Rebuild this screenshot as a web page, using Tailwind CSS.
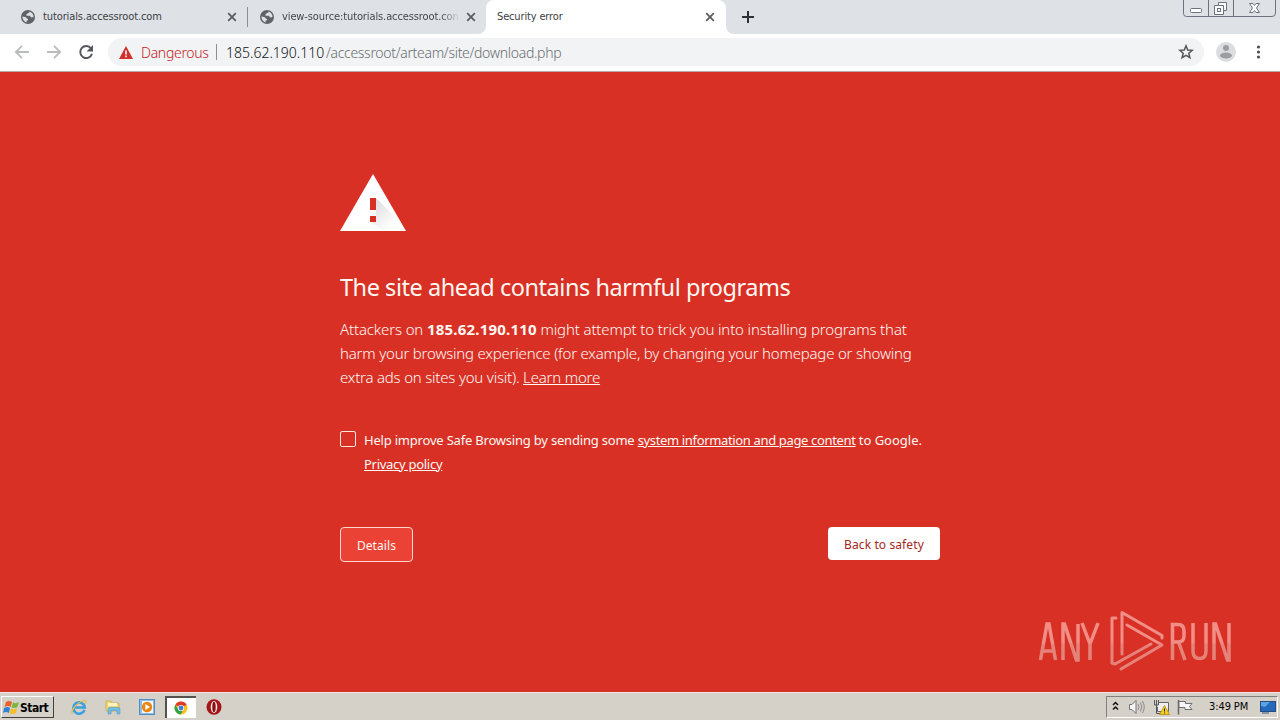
<!DOCTYPE html>
<html lang="en">
<head>
    <meta charset="UTF-8">
    <title>Security error</title>
    <script src="https://cdn.jsdelivr.net/npm/@tailwindcss/browser@4"></script>
</head>
<body class="w-[1280px] h-[720px] overflow-hidden flex flex-col bg-[#d93026] font-['Noto_Sans',sans-serif]">

    <svg class="hidden">
        <symbol id="globe" viewBox="0 0 14 14">
            <circle cx="7" cy="7" r="7" fill="#5f6368"/>
            <path d="M1.3 6.6 L4 6.9 Q5.6 7.2 5.7 8.6 Q7.4 8.8 7.2 10.2 L5.6 10.5 V12.4 Q2 11.6 1.3 6.6Z M8.6 1.5 Q8.4 3.2 6.8 3.1 Q6.6 4.3 5.2 4.5 Q5 5.7 6.2 5.8 H9 Q9.5 7.4 10.8 7.4 L12.5 7 Q12.6 3 8.6 1.5Z" fill="#dee1e6"/>
        </symbol>
        <symbol id="close" viewBox="0 0 10 10">
            <path d="M1.2 1.2 L8.8 8.8 M8.8 1.2 L1.2 8.8" stroke="#5a5d62" stroke-width="1.8"/>
        </symbol>
    </svg>

    <!-- Tab strip -->
    <div class="relative h-[34px] shrink-0 bg-[#dee1e6] flex text-[11px] text-[#3c4043] font-['DejaVu_Sans_Condensed','DejaVu_Sans',sans-serif]">
        <div class="w-[247px] flex items-center pl-[21px] pr-[10px]">
            <svg class="size-[14px] shrink-0"><use href="#globe"/></svg>
            <span class="ml-2 pt-px flex-1 whitespace-nowrap tracking-[-0.11px]">tutorials.accessroot.com</span>
            <svg class="size-[10px] shrink-0"><use href="#close"/></svg>
        </div>
        <div class="w-px h-5 mt-[7px] bg-[#8c8f94]"></div>
        <div class="w-[238px] flex items-center pl-3 pr-[10px]">
            <svg class="size-[14px] shrink-0"><use href="#globe"/></svg>
            <span class="ml-2 pt-px w-[176px] overflow-hidden whitespace-nowrap tracking-[-0.11px] bg-gradient-to-r from-[#3c4043] from-90% to-[#3c4043]/10 bg-clip-text text-transparent">view-source:tutorials.accessroot.com</span>
            <svg class="ml-auto size-[10px] shrink-0"><use href="#close"/></svg>
        </div>
        <div class="relative w-[240px] bg-white rounded-t-lg flex items-center pl-[11px] pr-[11px]">
            <svg class="absolute bottom-0 -left-2 size-2"><path d="M8 0 A8 8 0 0 1 0 8 H8Z" fill="#fff"/></svg>
            <svg class="absolute bottom-0 -right-2 size-2"><path d="M0 0 A8 8 0 0 0 8 8 H0Z" fill="#fff"/></svg>
            <span class="flex-1 pt-px whitespace-nowrap tracking-[-0.15px]">Security error</span>
            <svg class="size-[10px] shrink-0"><use href="#close"/></svg>
        </div>
        <svg class="ml-4 mt-[11px] size-3"><path d="M6 0 V12 M0 6 H12" stroke="#2c2e38" stroke-width="2"/></svg>
        <!-- Window controls -->
        <svg class="absolute top-0 right-[3px] w-[94px] h-[18px]" fill="none" stroke="#6d7180">
            <path d="M.5 0 V13.5 Q.5 16.5 3.5 16.5 H89 Q92.5 16.5 92.5 13 V0 M25.5 0 V16 M50.5 0 V16"/>
            <rect x="7.500" y="8.500" width="11" height="4" rx="1" fill="#fff"/>
            <path d="M35.500 2.500 H43.500 V10.500 H40.500 V14.500 H31.500 V5.500 H35.500Z" fill="#fff"/>
            <rect x="34.500" y="8.500" width="3" height="3"/>
            <path d="M40.500 10.500 V5.500 H35.500"/>
            <path d="M66.500 3.500 h3.500 l1.500 2 l1.500 -2 h3.500 l-3 4.500 l3 4.500 h-3.500 l-1.500 -2 l-1.500 2 h-3.500 l3 -4.500z" fill="#fff"/>
        </svg>
    </div>

    <!-- Toolbar -->
    <div class="h-[38px] shrink-0 bg-white border-b border-[#b8aaa8] flex items-center">
        <svg class="ml-[14px] mb-px w-[82px] h-4 shrink-0" fill="none" stroke-width="1.8">
            <path d="M15 8 H2 M8 1.800 L1.800 8 L8 14.200" stroke="#babcbe"/>
            <path d="M33 8 H46 M40 1.800 L46.200 8 L40 14.200" stroke="#babcbe"/>
            <path d="M77 4.400 A6 6 0 1 0 78 9.800" stroke="#55585d" stroke-width="2"/>
            <path d="M79 1 V7.500 H72.500Z" fill="#55585d"/>
        </svg>
        <div class="ml-3 mb-px w-[1096px] h-7 rounded-full bg-[#f1f3f4] flex items-center text-[14px] whitespace-nowrap">
            <svg class="ml-[11px] w-[14px] h-[13px] shrink-0"><path d="M7 0 L14 13 H0Z" fill="#d2302a"/><path d="M7 4.500 V8.500 M7 9.500 V11.200" stroke="#fff" stroke-width="1.600"/></svg>
            <span class="ml-2 w-[68px] text-[#c5221f] font-light tracking-[-0.3px]">Dangerous</span>
            <div class="ml-[7px] w-px h-4 bg-[#8b8e92]"></div>
            <span class="ml-[9px] w-[100px] text-[#101114] font-light">185.62.190.110</span>
            <span class="text-[#6a6e73] font-light tracking-[-0.31px]">/accessroot/arteam/site/download.php</span>
            <svg class="ml-auto mr-[10px] size-4 shrink-0" viewBox="0 0 16 16"><path d="M8 1.800 L9.700 6 L14.300 6.300 L10.800 9.300 L11.900 13.700 L8 11.300 L4.100 13.700 L5.200 9.300 L1.700 6.300 L6.300 6Z" fill="none" stroke="#54575c" stroke-width="1.500"/></svg>
        </div>
        <svg class="ml-3 mb-px size-5 shrink-0"><circle cx="10" cy="10" r="10" fill="#dcdddf"/><circle cx="10" cy="6" r="3" fill="#9b9da0"/><ellipse cx="10" cy="13.500" rx="6" ry="3" fill="#9b9da0"/></svg>
        <svg class="ml-5 mb-px w-[5px] h-[14px] shrink-0" fill="#4c4f54"><circle cx="2.500" cy="2" r="1.600"/><circle cx="2.500" cy="7" r="1.600"/><circle cx="2.500" cy="12" r="1.600"/></svg>
    </div>

    <!-- Warning page -->
    <main class="relative flex-1 text-[#fff8f2] whitespace-nowrap">
        <div class="w-[600px] mx-auto pt-[102px]">
            <svg class="w-[66px] h-[57px]">
                <defs><linearGradient id="shade" x1="0" y1="0" x2="1" y2="1"><stop offset="0.1" stop-color="#c8c8c8"/><stop offset=".75" stop-color="#fff"/></linearGradient></defs>
                <path d="M33 0 L66 57 H0Z" fill="#fff"/>
                <path d="M36 24 L54 42 L63 57 H45 L30 48 L36 42Z" fill="url(#shade)" opacity=".65"/>
                <path d="M30 24 H36 V36 H30Z M30 42 H36 V48 H30Z" fill="#d93026"/>
            </svg>
            <h1 class="mt-[40px] w-max text-[23.5px] leading-[32px] font-normal tracking-[-0.46px]">The site ahead contains harmful programs</h1>
            <p class="mt-[14px] text-[15px] leading-6 font-light tracking-[-0.2px]">
                <span class="tracking-[-0.14px]">Attackers on <b class="font-bold tracking-[0.2px]">185.62.190.110</b> might attempt to trick you into installing programs that</span><br>
                <span>harm your browsing experience (for example, by changing your homepage or showing</span><br>
                <span>extra ads on sites you visit). <u>Learn more</u></span>
            </p>
            <div class="mt-[39px] flex">
                <div class="mt-[3px] size-4 shrink-0 border border-[#ffe9df] rounded-xs"></div>
                <p class="ml-2 text-[13px] leading-6 tracking-[-0.2px]">
                    <span>Help improve Safe Browsing by sending some <u class="tracking-[-0.35px]">system information and page content</u> <span class="tracking-normal">to Google.</span></span><br>
                    <u class="tracking-[-0.28px]">Privacy policy</u>
                </p>
            </div>
            <div class="mt-[51px] flex justify-between items-start text-[12px]">
                <button class="w-[73px] h-[35px] pt-[2px] border border-[#ffd9cf] rounded bg-[#ea4335] tracking-[0.1px]">Details</button>
                <button class="w-[112px] h-[33px] pt-[2px] rounded bg-white text-[#a52722] tracking-[0.1px]">Back to safety</button>
            </div>
        </div>
        <!-- Watermark -->
        <svg class="absolute left-[1035px] top-[536px] w-[200px] h-[68px]" fill="none" stroke="url(#mark)" stroke-width="3.500">
            <defs><linearGradient id="mark" gradientUnits="userSpaceOnUse" x1="0" y1="4" x2="0" y2="64"><stop offset=".5" stop-color="#f18e86"/><stop offset=".55" stop-color="#e5837a"/></linearGradient></defs>
            <path d="M5.500 52 L12 16 H14 L20.500 52 M7.500 43 H18.500 M28 52 V16 H29.500 L41.500 52 H43 V16 M47 15 L55 36 V52 M63 15 L55 36"/>
            <path d="M137.500 52 V16.500 H143 Q149 16.500 149 23 V28 Q149 34 143 34 H138 M143.500 34 L150 52 M158 15 V43 Q158 50.500 164.500 50.500 Q171 50.500 171 43 V15 M179 52 V16 H180.500 L192.500 52 H194 V15"/>
            <g stroke-width="3" stroke-linejoin="round" stroke-linecap="round">
                <path d="M81 10 H77 V55 L80 56 L116 36"/>
                <path d="M87 46 V4.500 L127 27.500 V30"/>
                <path d="M92 17 L127 37 L86 61"/>
            </g>
        </svg>
    </main>

    <!-- Taskbar -->
    <footer class="h-[28px] shrink-0 border-t border-[#eee9e1] bg-[#d5d0c8] flex items-center text-[11px] text-black font-['DejaVu_Sans_Condensed','DejaVu_Sans',sans-serif]">
        <div class="mt-px ml-px w-[53px] h-[22px] flex items-center border border-t-white border-l-white border-r-[#404040] border-b-[#404040]">
            <svg class="ml-px w-[17px] h-4 shrink-0"><path d="M3 3 Q6 1 9 3 L7.500 8 Q5 6 1.500 8Z" fill="#e9622a"/><path d="M10 3.500 Q13 5 16 3 L14.500 8 Q11.500 9.500 8.500 8.500Z" fill="#7bb83c"/><path d="M1 9 Q4.500 7 7 9 L5.800 14 Q3 12 0 14Z" fill="#2f83d5"/><path d="M8 9.500 Q11 11 14 9.200 L12.800 14 Q10 15.500 6.700 14.500Z" fill="#f8bd25"/></svg>
            <b class="pt-px text-[12px] tracking-[-0.5px]">Start</b>
        </div>
        <svg class="mt-px ml-[17px] w-4 h-4 shrink-0" fill="none"><path d="M13.500 11 A5.700 5.700 0 1 1 13.800 8.500 H4" stroke="#3ca0e0" stroke-width="2.600"/><path d="M1.500 14.500 C-1 11 9 1 14.500 1.500 Q16 2.500 14 5" stroke="#e9bd45" stroke-width="1.200"/></svg>
        <svg class="mt-px ml-[18px] w-4 h-4 shrink-0"><path d="M1 2 H6 L7 4 H14 V12 H1Z" fill="#f0d778" stroke="#c6a64a" stroke-width=".7"/><path d="M3 4 H12 V7 H3Z" fill="#fff4bf"/><path d="M3 15 V10 Q3 8.500 5 8.500 H13 Q15 8.500 15 10 V15 H12 V11.500 H6 V15Z" fill="#75bce0" stroke="#4c9bc6" stroke-width=".6"/></svg>
        <svg class="mt-px ml-[18px] w-4 h-4 shrink-0"><rect x=".5" y=".5" width="15" height="15" fill="#92bde2" stroke="#4f8ec4"/><rect x="3" y="2" width="11" height="12" fill="#f2f6fa"/><circle cx="8" cy="8" r="5.200" fill="#ed8514"/><path d="M6.300 5 L11 8 L6.300 11Z" fill="#fff"/></svg>
        <div class="mt-px ml-[10px] w-[31px] h-[22px] shrink-0 bg-white border-t-2 border-l-2 border-[#55524e] flex items-center justify-center">
            <svg class="mr-[2px] mb-px size-[14px]" viewBox="0 0 14 14"><circle cx="7" cy="7" r="6.500" fill="#fbc116"/><path d="M7 7 L1.370 3.750 A6.500 6.500 0 0 1 12.630 3.750Z M7 3.800 H12.650 L7 7Z" fill="#de3b2c"/><path d="M1.370 3.750 A6.500 6.500 0 0 0 6.600 13.500 L9.500 8.500 L4.300 8.800Z" fill="#30a24e"/><circle cx="7" cy="7" r="3.100" fill="#fff"/><circle cx="7" cy="7" r="2.400" fill="#3d7fe0"/></svg>
        </div>
        <svg class="mt-px ml-[10px] w-4 h-4 shrink-0"><ellipse cx="8" cy="8" rx="7.500" ry="7.800" fill="#a51416"/><ellipse cx="8" cy="8" rx="3.300" ry="6" fill="#f2eeee"/><ellipse cx="8" cy="8" rx="1.700" ry="5.300" fill="#8e0d10"/></svg>
        <div class="mt-px ml-auto mr-[2px] w-[172px] h-[22px] shrink-0 border border-t-[#808080] border-l-[#808080] border-b-white border-r-white flex items-center">
            <svg class="ml-[5px] w-[84px] h-[18px] shrink-0" fill="none">
                <path d="M1 7 L3.500 4.500 L6 7 M1 11.500 L3.500 9 L6 11.500" stroke="#111" stroke-width="1.500"/>
                <path d="M17.500 6.500 H20 L24 2.500 V15.500 L20 11.500 H17.500Z" fill="#f5f5f5" stroke="#75757a"/>
                <path d="M26 6 Q28 9 26 12 M28.500 4.500 Q31 9 28.500 13.500 M30.500 3 Q34 9 30.500 15" stroke="#8b8b8e"/>
                <path d="M46.500 4.500 H56.500 V13.500 H45.500 V9" fill="#eee" stroke="#66666a"/><path d="M42.500 2 V7 H46.500 V2 M44.500 2 V15.500 H49" stroke="#55555a"/>
                <path d="M52.500 7.500 L57.500 16.500 H47.500Z" fill="#f9cf22" stroke="#b18a13" stroke-width=".8"/><path d="M52.500 10.500 V13.500 M52.500 14.500 V15.500" stroke="#222"/>
                <path d="M66.500 2 V16.500" stroke="#66666a" stroke-width="1.500"/><path d="M67 3.500 H73.500 V5.500 H80 L77.500 8.500 L80 11.500 H73 V9.500 H67Z" fill="#f6f6f6" stroke="#6f6f73"/>
            </svg>
            <span class="ml-[13px] pt-px w-[42px] whitespace-nowrap tracking-[-0.1px]">3:49 PM</span>
            <svg class="ml-[9px] w-4 h-[14px] shrink-0"><rect x=".5" y="1.500" width="15" height="10" fill="#2469bd" stroke="#254c7c"/><path d="M1 2 H10 L5 7 L1 6Z" fill="#5ba3e4"/><path d="M2 13 H9" stroke="#39587c"/></svg>
        </div>
    </footer>
</body>
</html>
